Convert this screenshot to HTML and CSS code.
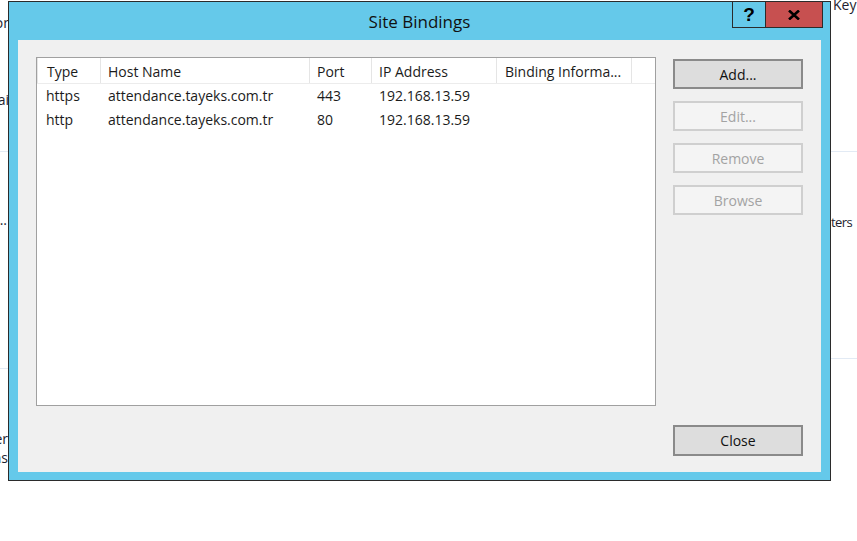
FILE: index.html
```html
<!DOCTYPE html>
<html>
<head>
<meta charset="utf-8">
<link rel="stylesheet" href="styles.css">
</head>
<body>
<div class="desktop">
  <div class="bg-row">Site Name gly Binding pqy Physical Path jyg Application Pool gqy Status</div>
  <div class="bg-txt bg-key">Key</div>
  <div class="bg-txt bg-or">Vendor</div>
  <div class="bg-txt bg-ai">Detai</div>
  <div class="bg-txt bg-dots">Setting...</div>
  <div class="bg-txt bg-er">Server</div>
  <div class="bg-txt bg-ns">Actions</div>
  <div class="bg-txt bg-ters">ters</div>
  <div class="bg-line bl-1"></div>
  <div class="bg-line bl-2"></div>
  <div class="bg-line br-1"></div>
  <div class="bg-line br-2"></div>

  <div class="window">
    <div class="titlebar">
      <span class="title">Site Bindings</span>
      <div class="controls">
        <div class="ctl help">?</div>
        <div class="ctl close">
          <svg width="12" height="10" viewBox="0 0 12 10"><path d="M1 0.5 L11 9.5 M11 0.5 L1 9.5" stroke="#000" stroke-width="2.6" fill="none"/></svg>
        </div>
      </div>
    </div>
    <div class="frame">
      <div class="client">
        <div class="listview">
          <div class="lv-row lv-head">
            <div class="c c-type">Type</div>
            <div class="c c-host">Host Name</div>
            <div class="c c-port">Port</div>
            <div class="c c-ip">IP Address</div>
            <div class="c c-bind">Binding Informa...</div>
          </div>
          <div class="lv-row">
            <div class="c c-type">https</div>
            <div class="c c-host">attendance.tayeks.com.tr</div>
            <div class="c c-port">443</div>
            <div class="c c-ip">192.168.13.59</div>
            <div class="c c-bind"></div>
          </div>
          <div class="lv-row">
            <div class="c c-type">http</div>
            <div class="c c-host">attendance.tayeks.com.tr</div>
            <div class="c c-port">80</div>
            <div class="c c-ip">192.168.13.59</div>
            <div class="c c-bind"></div>
          </div>
        </div>
        <div class="buttons">
          <div class="btn">Add...</div>
          <div class="btn disabled">Edit...</div>
          <div class="btn disabled">Remove</div>
          <div class="btn disabled">Browse</div>
          <div class="btn close-btn">Close</div>
        </div>
      </div>
    </div>
  </div>
</div>
</body>
</html>
```

FILE: styles.css
```css
html, body {
  margin: 0;
  padding: 0;
  background: #ffffff;
}
.desktop {
  position: relative;
  width: 857px;
  height: 541px;
  overflow: hidden;
  background: #ffffff;
  font-family: "Open Sans", "Noto Sans", sans-serif;
  font-size: 14px;
  color: #1b1b1b;
}
.bg-row {
  position: absolute;
  left: 30px;
  top: -17px;
  width: 780px;
  overflow: hidden;
  white-space: nowrap;
  font-size: 13px;
  line-height: 18px;
  letter-spacing: 6px;
  color: #3a2a4a;
}
.bg-txt {
  position: absolute;
  white-space: nowrap;
  color: #1e1e2e;
  font-size: 14px;
  line-height: 16px;
}
.bg-key { left: 833px; top: -3px; }
.bg-or { right: 848px; top: 15px; }
.bg-ai { right: 848px; top: 92px; }
.bg-dots { right: 850px; top: 212px; }
.bg-er { right: 849px; top: 431px; }
.bg-ns { right: 849px; top: 450px; }
.bg-ters { right: 5px; top: 214px; font-size: 13px; letter-spacing: -0.6px; }
.bg-line {
  position: absolute;
  height: 1px;
  background: #e2eaf4;
}
.bl-1 { left: 0; width: 20px; top: 151px; }
.bl-2 { left: 0; width: 20px; top: 368px; }
.br-1 { left: 820px; width: 37px; top: 151px; }
.br-2 { left: 820px; width: 37px; top: 358px; }

.window {
  position: absolute;
  left: 8px;
  top: 1px;
  width: 821px;
  border: 1px solid #2b2b2b;
  background: #65c9ea;
  display: flex;
  flex-direction: column;
}
.titlebar {
  position: relative;
  height: 38px;
  display: flex;
  align-items: center;
  justify-content: center;
}
.title {
  font-size: 17px;
  color: #111;
}
.controls {
  position: absolute;
  right: 7px;
  top: -1px;
  display: flex;
  border: 1px solid #2b2b2b;
  height: 25px;
}
.ctl {
  display: flex;
  align-items: center;
  justify-content: center;
  height: 25px;
}
.help {
  width: 32px;
  border-right: 1px solid #2b2b2b;
  font-family: "Liberation Sans", sans-serif;
  font-weight: bold;
  font-size: 19px;
  color: #000;
}
.close {
  width: 56px;
  background: #c75050;
}
.frame {
  padding: 0 9px 8px 9px;
}
.client {
  background: #f0f0f0;
  height: 399px;
  padding: 17px 18px 16px 18px;
  display: flex;
  gap: 17px;
}
.listview {
  width: 618px;
  height: 347px;
  border: 1px solid #a0a0a0;
  background: #ffffff;
}
.lv-row {
  box-sizing: border-box;
  display: flex;
  height: 24px;
  padding-bottom: 2px;
  align-items: center;
}
.lv-head {
  height: 26px;
  padding-bottom: 0;
  border-bottom: 1px solid #ececec;
}
.lv-head .c {
  border-right: 1px solid #e5e5e5;
  height: 25px;
  padding-top: 2px;
  display: flex;
  align-items: center;
}
.lv-head .c-type {
  border-left: 1px solid #e5e5e5;
}
.c {
  box-sizing: border-box;
  padding-left: 7px;
  white-space: nowrap;
  overflow: hidden;
}
.c-type { width: 64px; padding-left: 9px; }
.c-host { width: 209px; }
.c-port { width: 62px; }
.c-ip { width: 125px; }
.c-bind { width: 135px; padding-left: 8px; }

.buttons {
  width: 130px;
  display: flex;
  flex-direction: column;
  gap: 12px;
  padding-top: 2px;
}
.btn {
  box-sizing: border-box;
  height: 30px;
  border: 2px solid #8a8a8a;
  background: #dddddd;
  display: flex;
  align-items: center;
  justify-content: center;
  color: #111;
}
.btn.disabled {
  border-color: #cfcfcf;
  background: #f4f4f4;
  color: #a3a3a3;
}
.close-btn {
  margin-top: auto;
  height: 31px;
}
```
